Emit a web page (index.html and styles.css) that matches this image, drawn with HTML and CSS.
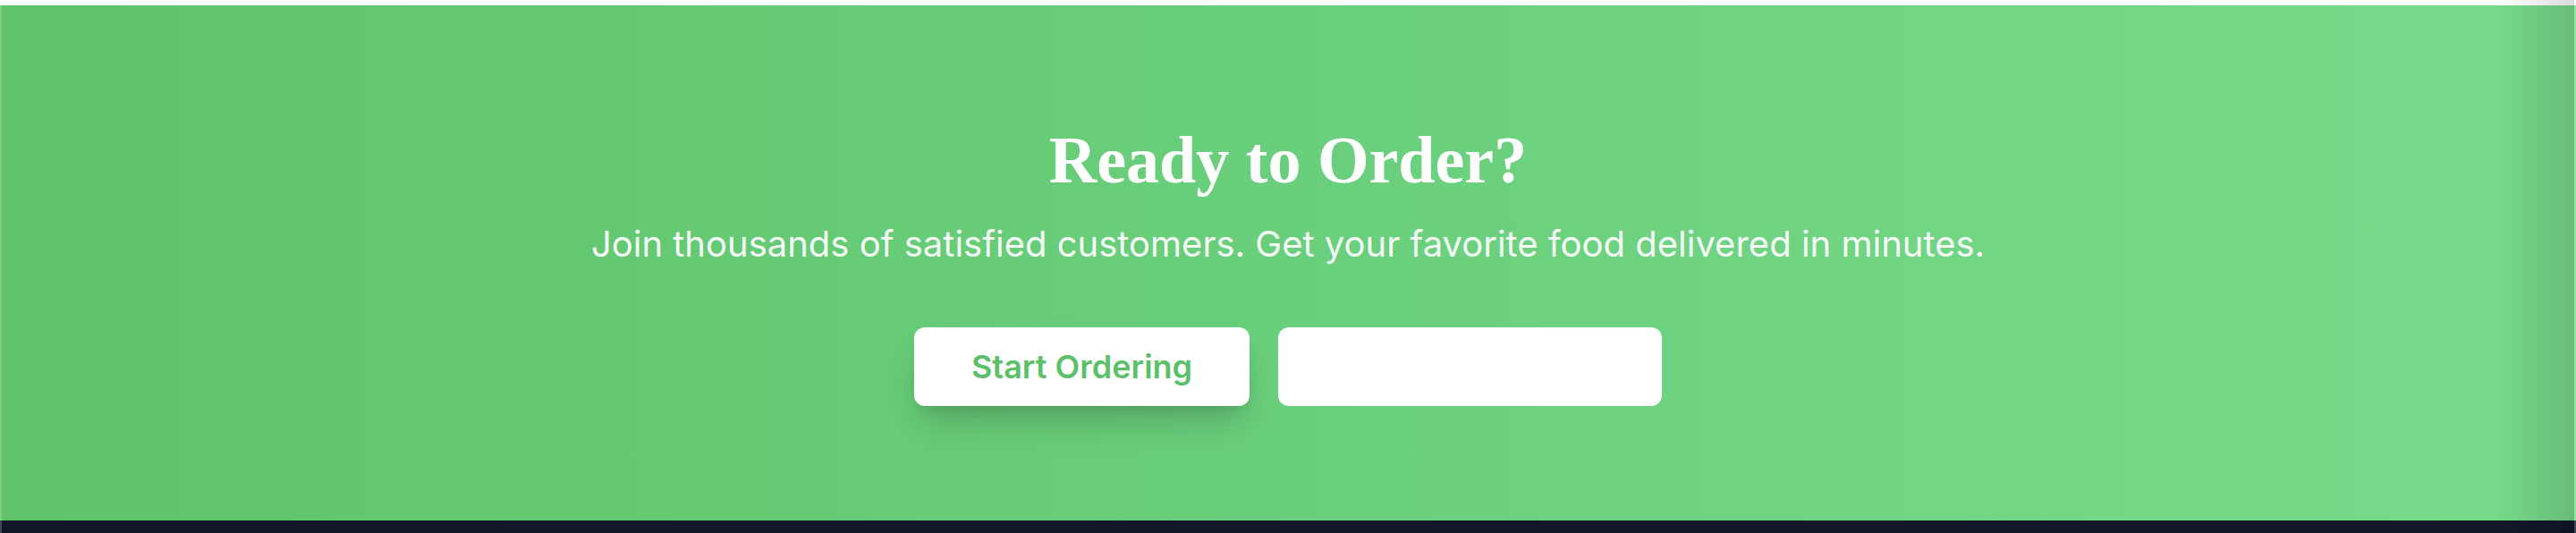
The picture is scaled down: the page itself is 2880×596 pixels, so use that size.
FILE: index.html
```html
<!DOCTYPE html>
<html lang="en">
<head>
<meta charset="utf-8">
<title>Ready to Order?</title>
<link rel="stylesheet" href="styles.css">
</head>
<body>
  <div class="top-strip"></div>
  <section class="cta">
    <h2 class="cta-title">Ready to Order?</h2>
    <p class="cta-text">Join thousands of satisfied customers. Get your favorite food delivered in minutes.</p>
    <div class="cta-actions">
      <a class="btn btn-primary" href="#">Start Ordering</a>
      <a class="btn btn-secondary" href="#">Download the App</a>
    </div>
  </section>
  <footer class="footer"></footer>
  <div class="edge edge-left"></div>
  <div class="edge-shade"></div>
  <div class="edge edge-right"></div>
</body>
</html>
```

FILE: styles.css
```css
html, body {
  margin: 0;
  padding: 0;
  background: #ffffff;
}

body {
  font-family: "Inter", "Liberation Sans", sans-serif;
  height: 596px;
  overflow: hidden;
  display: flex;
  flex-direction: column;
}

.top-strip {
  height: 6px;
  background: #ffffff;
  flex: none;
}

.cta {
  flex: none;
  height: 576px;
  box-sizing: border-box;
  padding: 133px 0 0;
  background: linear-gradient(90deg, #60c36b 0%, #6acf7c 50%, #78db8b 100%);
  display: flex;
  flex-direction: column;
  align-items: center;
  text-align: center;
}

.cta-title {
  margin: 0 0 26px;
  font-family: "Liberation Serif", "DejaVu Serif", serif;
  font-weight: 700;
  font-size: 74px;
  line-height: 80px;
  color: #ffffff;
  letter-spacing: 0;
}

.cta-text {
  margin: 0 0 65px;
  font-size: 40px;
  line-height: 56px;
  font-weight: 400;
  color: rgba(255, 255, 255, 0.94);
}

.cta-actions {
  display: flex;
  gap: 32px;
  justify-content: center;
}

.btn {
  display: flex;
  align-items: center;
  justify-content: center;
  box-sizing: border-box;
  height: 88px;
  padding: 0;
  border-radius: 12px;
  font-size: 36px;
  font-weight: 600;
  white-space: nowrap;
  letter-spacing: 0;
  text-decoration: none;
  background: #ffffff;
}

.btn-primary {
  width: 375px;
  color: #5cbf69;
  box-shadow: 0 24px 40px -8px rgba(0, 0, 0, 0.18), 0 10px 16px -8px rgba(0, 0, 0, 0.12);
}

.btn-secondary {
  width: 429px;
  color: #ffffff;
}

.footer {
  flex: 1;
  background: #111827;
}

.edge {
  position: fixed;
  top: 0;
  bottom: 0;
  width: 2px;
  background: rgba(255, 255, 255, 0.2);
}

.edge-left {
  left: 0;
}

.edge-right {
  right: 0;
}

.edge-shade {
  position: fixed;
  top: 0;
  bottom: 0;
  right: 2px;
  width: 90px;
  background: linear-gradient(90deg, rgba(0, 0, 0, 0) 0%, rgba(0, 0, 0, 0.05) 40%, rgba(0, 0, 0, 0.14) 100%);
}
```
